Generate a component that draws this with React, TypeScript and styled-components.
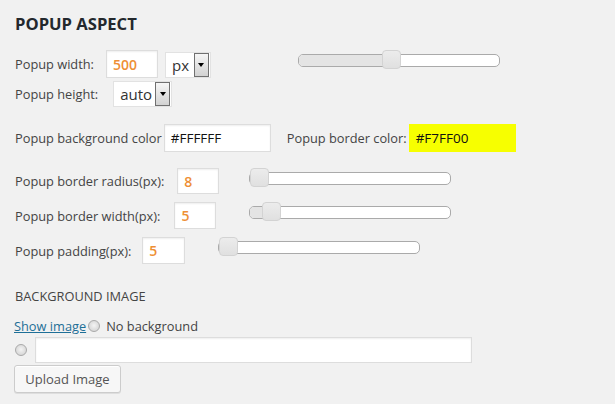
import React from "react";
import styled, { createGlobalStyle } from "styled-components";

const Global = createGlobalStyle`
  html, body { margin: 0; padding: 0; background: #f1f1f1; }
  body { font-family: "Open Sans", "Liberation Sans", sans-serif; font-size: 12.8px; color: #444; }
`;

const Page = styled.div`
  width: 615px;
  height: 404px;
  box-sizing: border-box;
  padding: 12px 0 0 15px;
  overflow: hidden;
`;

const Title = styled.h3`
  margin: 0;
  font-size: 16.6px;
  font-weight: 700;
  color: #23282d;
  line-height: 24px;
`;

const Row = styled.div<{ $mt: number; $h?: number }>`
  display: flex;
  align-items: center;
  margin-top: ${(p) => p.$mt}px;
  height: ${(p) => p.$h ?? 28}px;
`;

const Label = styled.span<{ $gap?: number }>`
  margin-right: ${(p) => p.$gap ?? 0}px;
  white-space: nowrap;
  color: #444;
`;

const TextInput = styled.div<{ $w: number; $bg?: string; $orange?: boolean; $h?: number }>`
  box-sizing: border-box;
  width: ${(p) => p.$w}px;
  height: ${(p) => p.$h ?? 28}px;
  background: ${(p) => p.$bg ?? "#fff"};
  border: 1px solid ${(p) => (p.$bg ? p.$bg : "#ddd")};
  box-shadow: ${(p) => (p.$bg ? "none" : "inset 0 1px 2px rgba(0,0,0,0.07)")};
  padding: 0 6px;
  display: flex;
  align-items: center;
  font-size: ${(p) => (p.$orange ? 14 : 13.5)}px;
  font-weight: ${(p) => (p.$orange ? 600 : 400)};
  color: ${(p) => (p.$orange ? "#ee8f35" : "#111")};
`;

const Select = styled.div<{ $w: number }>`
  box-sizing: border-box;
  width: ${(p) => p.$w}px;
  height: 26px;
  background: #fff;
  border: 1px solid #e2e2e2;
  display: flex;
  align-items: center;
  justify-content: space-between;
  padding: 0 1px 0 6px;
  font-size: 15px;
  color: #333;
`;

const ArrowBox = styled.span`
  box-sizing: border-box;
  width: 15px;
  height: 24px;
  border: 1px solid #707070;
  background: linear-gradient(#f6f6f6, #d2d2d2);
  display: flex;
  align-items: center;
  justify-content: center;
  &::after {
    content: "";
    border-left: 3.5px solid transparent;
    border-right: 3.5px solid transparent;
    border-top: 4px solid #000;
  }
`;

const SliderWrap = styled.div<{ $ml: number }>`
  align-self: flex-start;
  margin-top: 4px;
  margin-left: ${(p) => p.$ml}px;
`;

const Track = styled.div`
  position: relative;
  box-sizing: border-box;
  width: 202px;
  height: 13px;
  border: 1px solid #aaa;
  border-radius: 5px;
  background: #fff;
`;

const Range = styled.div`
  position: absolute;
  left: 0;
  top: 0;
  bottom: 0;
  background: #e4e4e4;
  border-radius: 4px 0 0 4px;
`;

const Handle = styled.div`
  position: absolute;
  top: -5px;
  box-sizing: border-box;
  width: 19px;
  height: 19px;
  border: 1px solid #d3d3d3;
  border-radius: 4px;
  background: linear-gradient(#ececec, #e0e0e0);
`;

const Slider = ({ value, ml }: { value: number; ml: number }) => (
  <SliderWrap $ml={ml}>
    <Track>
      <Range style={{ width: `${value}px` }} />
      <Handle style={{ left: `${value}px` }} />
    </Track>
  </SliderWrap>
);

const Section = styled.div`
  margin-top: 23px;
  text-transform: uppercase;
  color: #444;
  line-height: 18px;
`;

const Link = styled.a`
  color: #1e6f97;
  text-decoration: underline;
  cursor: pointer;
`;

const Radio = styled.span<{ $ml?: number; $mr?: number }>`
  box-sizing: border-box;
  display: inline-block;
  width: 12px;
  height: 12px;
  border-radius: 50%;
  border: 1px solid #a9a9a9;
  background: radial-gradient(circle at 50% 45%, #f4f4f4 0, #e2e2e2 45%, #cfcfcf 100%);
  margin-left: ${(p) => p.$ml ?? 0}px;
  margin-right: ${(p) => p.$mr ?? 0}px;
`;

const Button = styled.button`
  box-sizing: border-box;
  height: 28px;
  width: 107px;
  padding: 0 10px;
  font-family: inherit;
  font-size: 13px;
  color: #555;
  background: #f7f7f7;
  border: 1px solid #ccc;
  border-radius: 3px;
  box-shadow: inset 0 1px 0 #fff, 0 1px 0 rgba(0, 0, 0, 0.08);
  margin-left: -1px;
`;

export default function App() {
  return (
    <Page>
      <Global />
      <Title>POPUP ASPECT</Title>
      <Row $mt={14}>
        <Label $gap={12}>Popup width:</Label>
        <TextInput $w={52} $orange>500</TextInput>
        <Select $w={46} style={{ marginLeft: 7, alignSelf: "flex-end" }}>
          px
          <ArrowBox />
        </Select>
        <Slider value={83} ml={87} />
      </Row>
      <Row $mt={3} $h={26}>
        <Label $gap={15}>Popup height:</Label>
        <Select $w={59}>
          auto
          <ArrowBox />
        </Select>
      </Row>
      <Row $mt={17}>
        <Label $gap={2}>Popup background color</Label>
        <TextInput $w={107}>#FFFFFF</TextInput>
        <Label $gap={2} style={{ marginLeft: 16 }}>Popup border color:</Label>
        <TextInput $w={107} $bg="#f7ff00">#F7FF00</TextInput>
      </Row>
      <Row $mt={16} $h={26}>
        <Label $gap={13}>Popup border radius(px):</Label>
        <TextInput $w={42} $h={26} $orange>8</TextInput>
        <Slider value={0} ml={30} />
      </Row>
      <Row $mt={8} $h={27}>
        <Label $gap={14}>Popup border width(px):</Label>
        <TextInput $w={42} $h={27} $orange>5</TextInput>
        <Slider value={12} ml={33} />
      </Row>
      <Row $mt={8} $h={27}>
        <Label $gap={11}>Popup padding(px):</Label>
        <TextInput $w={43} $h={27} $orange>5</TextInput>
        <Slider value={0} ml={33} />
      </Row>
      <Section>Background image</Section>
      <Row $mt={12} $h={18} style={{ marginLeft: -1 }}>
        <Link>Show image</Link>
        <Radio $ml={2} $mr={6} />
        <span>No background</span>
      </Row>
      <Row $mt={2} $h={26}>
        <Radio $mr={8} />
        <TextInput $w={437} $h={26}></TextInput>
      </Row>
      <Row $mt={2}>
        <Button>Upload Image</Button>
      </Row>
    </Page>
  );
}
